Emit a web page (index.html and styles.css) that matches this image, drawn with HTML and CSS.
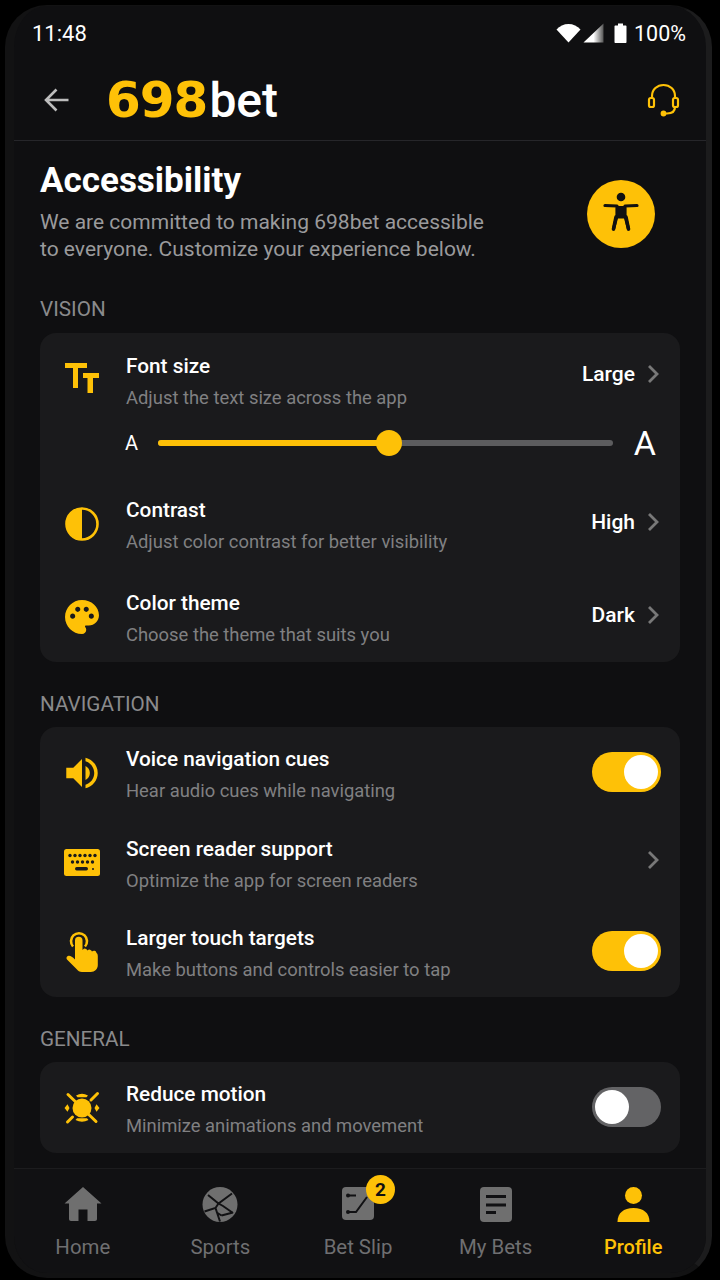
FILE: index.html
```html
<!DOCTYPE html>
<html lang="en">
<head>
    <meta charset="UTF-8">
    <meta name="viewport" content="width=device-width, initial-scale=1.0">
    <title>698bet - Accessibility</title>
    <link rel="stylesheet" href="styles.css">
</head>
<body>
    <div class="phone">
        <div class="screen">
            <div class="status-bar">
                <span class="status-time">11:48</span>
                <div class="status-icons">
                    <svg class="ic-wifi" width="25" height="20" viewBox="0 0 25 20"><path d="M0.500 6.500C3.500 3 8 1 12.500 1S21.500 3 24.500 6.500L12.500 19.500z" fill="#fff"/></svg>
                    <svg class="ic-signal" width="22" height="20" viewBox="0 0 22 20"><defs><linearGradient id="sig" x1="0" x2="1" y1="0" y2="0"><stop offset="0.5" stop-color="#fff"/><stop offset="1" stop-color="#555"/></linearGradient></defs><path d="M0.500 19.500L20.500 0.500V19.500z" fill="url(#sig)"/></svg>
                    <svg class="ic-batt" width="13" height="20" viewBox="0 0 13 20"><path d="M4 0.500h5v2h2.500c.6 0 1 .4 1 1V19c0 .6-.4 1-1 1H1.500c-.6 0-1-.4-1-1V3.500c0-.6.4-1 1-1H4z" fill="#fff"/></svg>
                    <span class="status-pct">100%</span>
                </div>
            </div>

            <header class="top-bar">
                <svg class="back-arrow" width="26" height="26" viewBox="0 0 26 26"><path d="M24.500 13H2.500M12.500 2.500L2 13l10.500 10.500" fill="none" stroke="#bdbdbd" stroke-width="2.600"/></svg>
                <div class="logo"><span class="logo-num">698</span><span class="logo-bet">bet</span></div>
                <svg class="support" width="34" height="34" viewBox="0 0 34 34" fill="none" stroke="#fec107" stroke-width="2.200">
                    <path d="M5 15V13C5 6.500 10.200 2 16.500 2S28 6.500 28 13v2"/>
                    <rect x="2" y="15" width="5" height="9" rx="1.800"/>
                    <rect x="26" y="15" width="5" height="9" rx="1.800"/>
                    <path d="M28 24c0 4-3 6.500-8 6.500h-3"/>
                    <circle cx="16.500" cy="30.500" r="1.800" fill="#fec107"/>
                </svg>
            </header>

            <main class="content">
                <section class="hero">
                    <div class="hero-text">
                        <h1>Accessibility</h1>
                        <p>We are committed to making 698bet accessible<br>to everyone. Customize your experience below.</p>
                    </div>
                    <div class="hero-badge">
                        <svg width="40" height="46" viewBox="0 0 40 46"><circle cx="20" cy="6" r="4.300" fill="#111"/><path d="M4 14.500l12 .5v9.500L12.500 38M36 14.500L24 15v9.500L27.500 38" fill="none" stroke="#111" stroke-width="3.200" stroke-linecap="round" stroke-linejoin="round"/><path d="M15.500 15h9v12.500h-9z" fill="#111"/><path d="M15 26L12.500 38M25 26l2.500 12" stroke="#111" stroke-width="3.600" stroke-linecap="round"/></svg>
                    </div>
                </section>

                <h2 class="group-label first">VISION</h2>
                <div class="card card-vision">
                    <div class="row">
                        <svg class="row-icon icon-tt" width="36" height="30" viewBox="0 0 36 30" fill="#fec107"><path d="M1 0h22v5h-9v20H9V5H1zM19 10h16v5h-6v15h-5.500V15H19z"/></svg>
                        <div class="row-text">
                            <div class="row-title">Font size</div>
                            <div class="row-sub">Adjust the text size across the app</div>
                        </div>
                        <div class="row-value value-up"><span>Large</span><svg class="chev" width="14" height="20" viewBox="0 0 14 20"><path d="M3 2l8 8-8 8" fill="none" stroke="#787878" stroke-width="2.800"/></svg></div>
                    </div>
                    <div class="slider-row">
                        <span class="a-small">A</span>
                        <div class="slider"><div class="slider-fill" style="width:50.800%"></div><div class="slider-thumb" style="left:50.800%"></div></div>
                        <span class="a-big">A</span>
                    </div>
                    <div class="row row-contrast">
                        <svg class="row-icon" width="36" height="36" viewBox="0 0 36 36"><circle cx="18" cy="18" r="15.500" fill="none" stroke="#fec107" stroke-width="2.600"/><path d="M18 2.500a15.500 15.500 0 0 0 0 31z" fill="#fec107"/></svg>
                        <div class="row-text">
                            <div class="row-title">Contrast</div>
                            <div class="row-sub">Adjust color contrast for better visibility</div>
                        </div>
                        <div class="row-value"><span>High</span><svg class="chev" width="14" height="20" viewBox="0 0 14 20"><path d="M3 2l8 8-8 8" fill="none" stroke="#787878" stroke-width="2.800"/></svg></div>
                    </div>
                    <div class="row row-wide">
                        <svg class="row-icon" width="36" height="36" viewBox="1.400 1.400 21.200 21.200" fill="#fec107"><path d="M12 2C6.490 2 2 6.490 2 12s4.490 10 10 10c1.380 0 2.500-1.120 2.500-2.500 0-.61-.23-1.200-.64-1.670-.08-.1-.13-.21-.13-.33 0-.28.22-.5.5-.5H16c3.310 0 6-2.690 6-6 0-4.960-4.490-9-10-9zm5.500 11c-.83 0-1.500-.67-1.500-1.500s.67-1.500 1.500-1.500 1.500.67 1.500 1.500-.67 1.500-1.500 1.500zm-3-4c-.83 0-1.500-.67-1.500-1.500S13.670 6 14.500 6s1.500.67 1.500 1.500S15.330 9 14.500 9zM5 11.500c0-.83.67-1.500 1.500-1.500s1.500.67 1.500 1.500S7.330 13 6.500 13 5 12.330 5 11.500zm6-4c0 .83-.67 1.500-1.500 1.500S8 8.330 8 7.500 8.670 6 9.500 6s1.500.67 1.500 1.500z"/></svg>
                        <div class="row-text">
                            <div class="row-title">Color theme</div>
                            <div class="row-sub">Choose the theme that suits you</div>
                        </div>
                        <div class="row-value"><span>Dark</span><svg class="chev" width="14" height="20" viewBox="0 0 14 20"><path d="M3 2l8 8-8 8" fill="none" stroke="#787878" stroke-width="2.800"/></svg></div>
                    </div>
                </div>

                <h2 class="group-label">NAVIGATION</h2>
                <div class="card">
                    <div class="row">
                        <svg class="row-icon" width="36" height="36" viewBox="1.700 1.700 20.600 20.600" fill="#fec107"><path d="M3 9v6h4l5 5V4L7 9H3zm13.500 3c0-1.770-1.020-3.290-2.500-4.030v8.050c1.480-.73 2.500-2.250 2.500-4.020zM14 3.230v2.060c2.890.86 5 3.540 5 6.710s-2.110 5.850-5 6.710v2.060c4.010-.91 7-4.490 7-8.770s-2.990-7.860-7-8.770z"/></svg>
                        <div class="row-text">
                            <div class="row-title">Voice navigation cues</div>
                            <div class="row-sub">Hear audio cues while navigating</div>
                        </div>
                        <div class="toggle on"><div class="knob"></div></div>
                    </div>
                    <div class="row row-nav">
                        <svg class="row-icon" width="36" height="27" viewBox="0 0 36 27"><rect width="36" height="27" rx="2.500" fill="#fec107"/><g fill="#1a1a1c"><circle cx="6" cy="6.500" r="1.700"/><circle cx="11" cy="6.500" r="1.700"/><circle cx="16" cy="6.500" r="1.700"/><circle cx="21" cy="6.500" r="1.700"/><circle cx="26" cy="6.500" r="1.700"/><circle cx="31" cy="6.500" r="1.700"/><circle cx="8.500" cy="13" r="1.700"/><circle cx="13.500" cy="13" r="1.700"/><circle cx="18.500" cy="13" r="1.700"/><circle cx="23.500" cy="13" r="1.700"/><circle cx="28.500" cy="13" r="1.700"/><rect x="11" y="18" width="13" height="3.400" rx="1.700"/><circle cx="29" cy="20" r="1"/></g></svg>
                        <div class="row-text">
                            <div class="row-title">Screen reader support</div>
                            <div class="row-sub">Optimize the app for screen readers</div>
                        </div>
                        <div class="row-value"><svg class="chev" width="14" height="20" viewBox="0 0 14 20"><path d="M3 2l8 8-8 8" fill="none" stroke="#787878" stroke-width="2.800"/></svg></div>
                    </div>
                    <div class="row row-nav">
                        <svg class="row-icon" width="36" height="42" viewBox="0 0 36 42"><path d="M9 15.500A8 8 0 1 1 21 15.500" fill="none" stroke="#fec107" stroke-width="2.600"/><path d="M11 9.500a3.600 3.600 0 0 1 7.500 0V19l.5-.5a2.600 2.600 0 0 1 4.500 1a2.600 2.600 0 0 1 4.500 1a2.600 2.600 0 0 1 4.500 1.500c1 .5 1.300 2 1.300 3V34c0 4-3 7-7 7H18c-2.500 0-4-1-5.500-3L3 28.500c-1-1.200-.5-3 1-3.500c2-.6 4 .5 7 3.500z" fill="#fec107"/></svg>
                        <div class="row-text">
                            <div class="row-title">Larger touch targets</div>
                            <div class="row-sub">Make buttons and controls easier to tap</div>
                        </div>
                        <div class="toggle on"><div class="knob"></div></div>
                    </div>
                </div>

                <h2 class="group-label">GENERAL</h2>
                <div class="card">
                    <div class="row">
                        <svg class="row-icon" width="36" height="36" viewBox="0 0 36 36" fill="#fec107"><circle cx="18" cy="18" r="9.500"/><path d="M4 4.500l28 27M33.500 3.500L27 10M3.500 32l5-5" fill="none" stroke="#fec107" stroke-width="3" stroke-linecap="round"/><path d="M12 5.500q6-3.500 12 0l-1.500 1.800h-9zM11.500 30q6.500 3.500 13 0l-1.500-1.800h-10zM0.500 18l3-3.800 2 3.800-2 3.800zM35.500 18l-3-3.800-2 3.800 2 3.800z"/></svg>
                        <div class="row-text">
                            <div class="row-title">Reduce motion</div>
                            <div class="row-sub">Minimize animations and movement</div>
                        </div>
                        <div class="toggle"><div class="knob"></div></div>
                    </div>
                </div>
            </main>

            <nav class="bottom-nav">
                <div class="nav-item">
                    <svg width="38" height="35" viewBox="0 0 38 35" fill="#6f6f6f"><path d="M19 0L0.500 16.500H5V32c0 1.200.8 2 2 2h7.500V22.500h9V34H31c1.200 0 2-.8 2-2V16.500h4.500z"/></svg>
                    <span>Home</span>
                </div>
                <div class="nav-item">
                    <svg width="36" height="35" viewBox="0 0 36 35"><circle cx="18" cy="17.500" r="17.500" fill="#6f6f6f"/><path d="M6 8l10.500 8.500L30 6.500M16.500 16.500l-3 4.500L2.500 24.500M13.500 21L18 34.500M16.500 16.500L21 19l10 7M19.500 28.500L31 25.500M15.500 26l4 2.500" fill="none" stroke="#111113" stroke-width="2"/></svg>
                    <span>Sports</span>
                </div>
                <div class="nav-item">
                    <div class="slip-icon">
                        <svg width="32" height="33" viewBox="0 0 32 33"><rect width="32" height="33" rx="4" fill="#6f6f6f"/><path d="M6 8.500h8M6 25h8l11-15" fill="none" stroke="#111113" stroke-width="2"/><circle cx="6" cy="8.500" r="2" fill="#111113"/><circle cx="6" cy="25" r="2" fill="#111113"/></svg>
                        <span class="badge">2</span>
                    </div>
                    <span>Bet Slip</span>
                </div>
                <div class="nav-item">
                    <svg width="32" height="35" viewBox="0 0 32 35"><rect width="32" height="35" rx="4" fill="#6f6f6f"/><path d="M6 9.500h20M6 18h20M6 25.500h10" stroke="#111113" stroke-width="3"/></svg>
                    <span>My Bets</span>
                </div>
                <div class="nav-item active">
                    <svg width="33" height="35" viewBox="0 0 33 35" fill="#fec107"><circle cx="16.500" cy="8.500" r="8.500"/><path d="M0.500 35c0-9 6-14 16-14s16 5 16 14z"/></svg>
                    <span>Profile</span>
                </div>
            </nav>
        </div>
    </div>
</body>
</html>
```

FILE: styles.css
```css
body {
    margin: 0;
    background-color: #000000;
    font-family: Roboto, "Liberation Sans", sans-serif;
    color: #ffffff;
}
.phone {
    width: 720px;
    height: 1280px;
    padding: 5px 8px 2px 5px;
    box-sizing: border-box;
}
.screen {
    height: 100%;
    box-sizing: border-box;
    border-style: solid;
    border-color: #121213;
    border-width: 1px 6px 5px 9px;
    border-right-color: #1c1c1d;
    border-radius: 42px;
    background-color: #0f0f11;
    display: flex;
    flex-direction: column;
    overflow: hidden;
}

/* status bar */
.status-bar {
    height: 54px;
    flex-shrink: 0;
    display: flex;
    align-items: center;
    justify-content: space-between;
    padding: 0 20px 0 18px;
}
.status-time {
    font-size: 22px;
}
.status-icons {
    display: flex;
    align-items: center;
}
.ic-signal {
    margin-left: 2px;
}
.ic-batt {
    margin-left: 9px;
}
.status-pct {
    font-size: 21.500px;
    margin-left: 7px;
}

/* header */
.top-bar {
    height: 80px;
    flex-shrink: 0;
    display: flex;
    align-items: center;
    padding: 0 25px 0 30px;
    border-bottom: 1px solid #26262a;
}
.logo {
    margin-left: 36px;
    flex: 1;
    display: flex;
    align-items: baseline;
    line-height: 1;
}
.logo-num {
    font-family: "DejaVu Sans", sans-serif;
    font-weight: 700;
    font-size: 50px;
    color: #fec107;
    letter-spacing: -1px;
}
.logo-bet {
    font-weight: 500;
    font-size: 48px;
    margin-left: 2px;
}

/* content */
.content {
    flex: 1;
    min-height: 0;
    overflow: hidden;
    padding: 20px 26px 0;
}
.hero {
    display: flex;
    justify-content: space-between;
    align-items: flex-start;
}
.hero h1 {
    margin: 0;
    font-size: 35px;
    line-height: 40px;
    font-weight: 700;
}
.hero p {
    margin: 8px 0 0;
    font-size: 21px;
    line-height: 27px;
    color: #9a9a9c;
}
.hero-badge {
    width: 68px;
    height: 68px;
    border-radius: 50%;
    background-color: #fec107;
    margin: 19px 25px 0 0;
    display: flex;
    align-items: center;
    justify-content: center;
}
.group-label {
    margin: 30px 0 11px;
    font-size: 20.700px;
    line-height: 24px;
    font-weight: 400;
    color: #8a8a8c;
}
.group-label.first {
    margin-top: 34px;
    margin-bottom: 12px;
}
.card {
    background-color: #1a1a1c;
    border-radius: 16px;
    padding: 19px 19px 16px 24px;
}
.card-vision {
    padding-top: 20px;
}
.row {
    display: flex;
    align-items: center;
}
.row-contrast {
    margin-top: 40px;
}
.row-wide {
    margin-top: 37px;
}
.row-nav {
    margin-top: 33.500px;
}
.row-icon {
    flex-shrink: 0;
    margin-right: 26px;
    margin-bottom: 3px;
}
.icon-tt {
    margin-bottom: 6px;
}
.row-text {
    flex: 1;
}
.row-title {
    font-size: 20.800px;
    line-height: 26px;
    font-weight: 500;
}
.row-sub {
    margin-top: 7px;
    margin-bottom: -1px;
    font-size: 18.400px;
    line-height: 24px;
    color: #808082;
}
.row-value {
    display: flex;
    align-items: center;
    font-size: 21px;
    font-weight: 500;
    margin-bottom: 7px;
    padding-right: 1px;
}
.value-up {
    margin-bottom: 15px;
}
.chev {
    margin-left: 11px;
}
.slider-row {
    display: flex;
    align-items: center;
    margin: 20px 5px 0 61px;
    height: 28px;
}
.a-small {
    font-size: 20px;
    width: 33px;
}
.a-big {
    font-size: 34px;
    margin-left: 21px;
}
.slider {
    position: relative;
    flex: 1;
    height: 6px;
    border-radius: 3px;
    background-color: #5c5c5e;
}
.slider-fill {
    height: 100%;
    border-radius: 3px;
    background-color: #fec107;
}
.slider-thumb {
    position: absolute;
    top: -10px;
    width: 26px;
    height: 26px;
    margin-left: -13px;
    border-radius: 50%;
    background-color: #fec107;
}
.toggle {
    width: 69px;
    height: 40px;
    box-sizing: border-box;
    border-radius: 20px;
    background-color: #636365;
    padding: 3px;
    margin-bottom: 5px;
}
.toggle.on {
    background-color: #fec107;
    display: flex;
    justify-content: flex-end;
}
.knob {
    width: 34px;
    height: 34px;
    border-radius: 50%;
    background-color: #ffffff;
}

/* bottom nav */
.bottom-nav {
    height: 105px;
    flex-shrink: 0;
    box-sizing: border-box;
    display: grid;
    grid-template-columns: repeat(5, 1fr);
    padding: 18px 4px 0 0;
    border-top: 1px solid #1c1c1e;
    background-color: #111113;
}
.nav-item {
    display: flex;
    flex-direction: column;
    align-items: center;
    font-size: 20.400px;
    color: #6f6f71;
}
.nav-item span {
    margin-top: 13px;
    line-height: 25px;
}
.nav-item.active {
    color: #fec107;
    font-weight: 500;
    font-size: 20px;
}
.slip-icon {
    position: relative;
    height: 35px;
}
.nav-item .badge {
    position: absolute;
    top: -12px;
    right: -21px;
    width: 29px;
    height: 29px;
    margin: 0;
    border-radius: 50%;
    background-color: #fec107;
    color: #111113;
    font-size: 19px;
    font-weight: 700;
    line-height: 29px;
    text-align: center;
}
```
